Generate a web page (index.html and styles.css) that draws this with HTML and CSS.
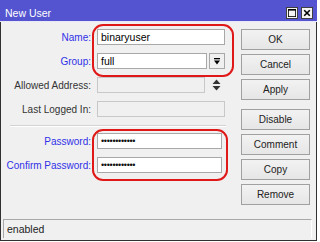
FILE: index.html
```html
<!DOCTYPE html>
<html>
<head>
    <title>New User</title>
    <link rel="stylesheet" href="styles.css">
</head>
<body>
    <div class="window">
        <div class="titlebar">
            <span class="title">New User</span>
            <div class="wbtns">
                <div class="wbtn">
                    <svg width="10" height="10" viewBox="0 0 10 10"><rect x="0.5" y="0.5" width="9" height="9" fill="none" stroke="#000"/><rect x="0" y="0" width="10" height="2" fill="#000"/></svg>
                </div>
                <div class="wbtn">
                    <svg width="10" height="10" viewBox="0 0 10 10"><path d="M1.5 1.5 L8.5 8.5 M8.5 1.5 L1.5 8.5" stroke="#000" stroke-width="2"/></svg>
                </div>
            </div>
        </div>

        <div class="content">
            <div class="form">
                <div class="grid">
                    <div class="lbl hl">Name:</div>
                    <div class="field"><div class="txt">binaryuser</div></div>

                    <div class="lbl hl">Group:</div>
                    <div class="field">
                        <div class="txt grow">full</div>
                        <div class="drop">
                            <svg width="6" height="7" viewBox="0 0 6 7"><rect x="0" y="0" width="6" height="1.3" fill="#000"/><path d="M0 2.5 L6 2.5 L3 6.5 Z" fill="#000"/></svg>
                        </div>
                    </div>

                    <div class="lbl">Allowed Address:</div>
                    <div class="field">
                        <div class="txt off short"></div>
                        <div class="spin">
                            <svg width="9" height="12" viewBox="0 0 9 12"><path d="M0.5 5 L8.5 5 L4.5 0.5 Z M0.5 7 L8.5 7 L4.5 11.5 Z" fill="#333"/></svg>
                        </div>
                    </div>

                    <div class="lbl">Last Logged In:</div>
                    <div class="field"><div class="txt off"></div></div>
                </div>

                <div class="sep"></div>

                <div class="grid pass">
                    <div class="lbl hl">Password:</div>
                    <div class="field"><div class="txt dots">••••••••••••</div></div>

                    <div class="lbl hl">Confirm Password:</div>
                    <div class="field"><div class="txt dots">••••••••••••</div></div>
                </div>
            </div>

            <div class="buttons">
                <button>OK</button>
                <button>Cancel</button>
                <button>Apply</button>
                <button class="gap">Disable</button>
                <button>Comment</button>
                <button>Copy</button>
                <button>Remove</button>
            </div>
        </div>

        <div class="status">enabled</div>

        <div class="mark mark-user"></div>
        <div class="mark mark-pass"></div>
    </div>
</body>
</html>
```

FILE: styles.css
```css
body {
    margin: 0;
    background: #fff;
    font-family: "Liberation Sans", Arial, sans-serif;
    font-size: 10px;
}
.window {
    position: relative;
    width: 317px;
    height: 241px;
    box-sizing: border-box;
    border: 1px solid #303030;
    border-top: none;
    background: #f0f0f0;
    display: flex;
    flex-direction: column;
}
.titlebar {
    height: 20px;
    margin: 0 -1px;
    background: #5454d0;
    border-bottom: 1px solid #e8e8f8;
    display: flex;
    align-items: flex-end;
    justify-content: space-between;
    padding: 0 4px 1px 5px;
}
.title {
    color: #fff;
    font-size: 10.5px;
    line-height: 12px;
    padding-bottom: 1px;
}
.wbtns {
    display: flex;
    gap: 3px;
    align-self: center;
    margin-top: 5px;
}
.wbtn {
    width: 10px;
    height: 10px;
    background: #f4f4f4;
    border: 1px solid #404040;
    display: flex;
    align-items: center;
    justify-content: center;
}
.wbtn svg {
    width: 8px;
    height: 8px;
}
.content {
    flex: 1;
    display: flex;
    padding-top: 7px;
}
.form {
    width: 225px;
}
.grid {
    display: grid;
    grid-template-columns: 90px 128px;
    grid-auto-rows: 16px;
    column-gap: 6px;
    row-gap: 8px;
}
.grid.pass {
    grid-template-columns: 90px 125px;
}
.lbl {
    text-align: right;
    color: #333;
    align-self: center;
    white-space: nowrap;
}
.lbl.hl {
    color: #3030e8;
}
.field {
    display: flex;
    align-items: stretch;
    gap: 2px;
}
.txt {
    flex: 1;
    box-sizing: border-box;
    background: #fff;
    border: 1px solid #a8a8a8;
    padding: 0 3px;
    line-height: 14px;
    color: #000;
    font-size: 10.5px;
}
.txt.off {
    background: #f0f0f0;
    border-color: #c8c8c8;
}
.txt.short {
    flex: 0 0 108px;
}
.txt.dots {
    font-size: 9px;
    letter-spacing: -0.3px;
    color: #111;
}
.drop {
    width: 16px;
    box-sizing: border-box;
    border: 1px solid #a8a8a8;
    background: #f0f0f0;
    display: flex;
    align-items: center;
    justify-content: center;
}
.spin {
    width: 20px;
    display: flex;
    align-items: center;
    justify-content: center;
}
.sep {
    height: 0;
    border-top: 1px solid #d4d4d4;
    border-bottom: 1px solid #fff;
    margin: 8px 0 6px 9px;
}
.buttons {
    margin-left: 15px;
    width: 69px;
    display: flex;
    flex-direction: column;
    gap: 4px;
}
button {
    height: 21px;
    margin: 0;
    padding: 0;
    font-family: "Liberation Sans", Arial, sans-serif;
    font-size: 10px;
    color: #222;
    background: linear-gradient(#f2f2f2, #e6e6e6);
    border: 1px solid #a0a0a0;
    border-radius: 0;
}
button.gap {
    margin-top: 5px;
}
.status {
    height: 19px;
    margin: 0 4px 2px 2px;
    box-sizing: border-box;
    border-top: 1px solid #a8a8a8;
    border-left: 1px solid #a8a8a8;
    border-right: 1px solid #fff;
    padding: 0 3px;
    line-height: 18px;
    color: #222;
    font-size: 10.5px;
}
.mark {
    position: absolute;
    border: 2px solid #e01818;
    border-radius: 11px;
    box-sizing: border-box;
}
.mark-user {
    left: 91px;
    top: 24px;
    width: 142px;
    height: 53px;
}
.mark-pass {
    left: 91px;
    top: 129px;
    width: 136px;
    height: 52px;
}
```
